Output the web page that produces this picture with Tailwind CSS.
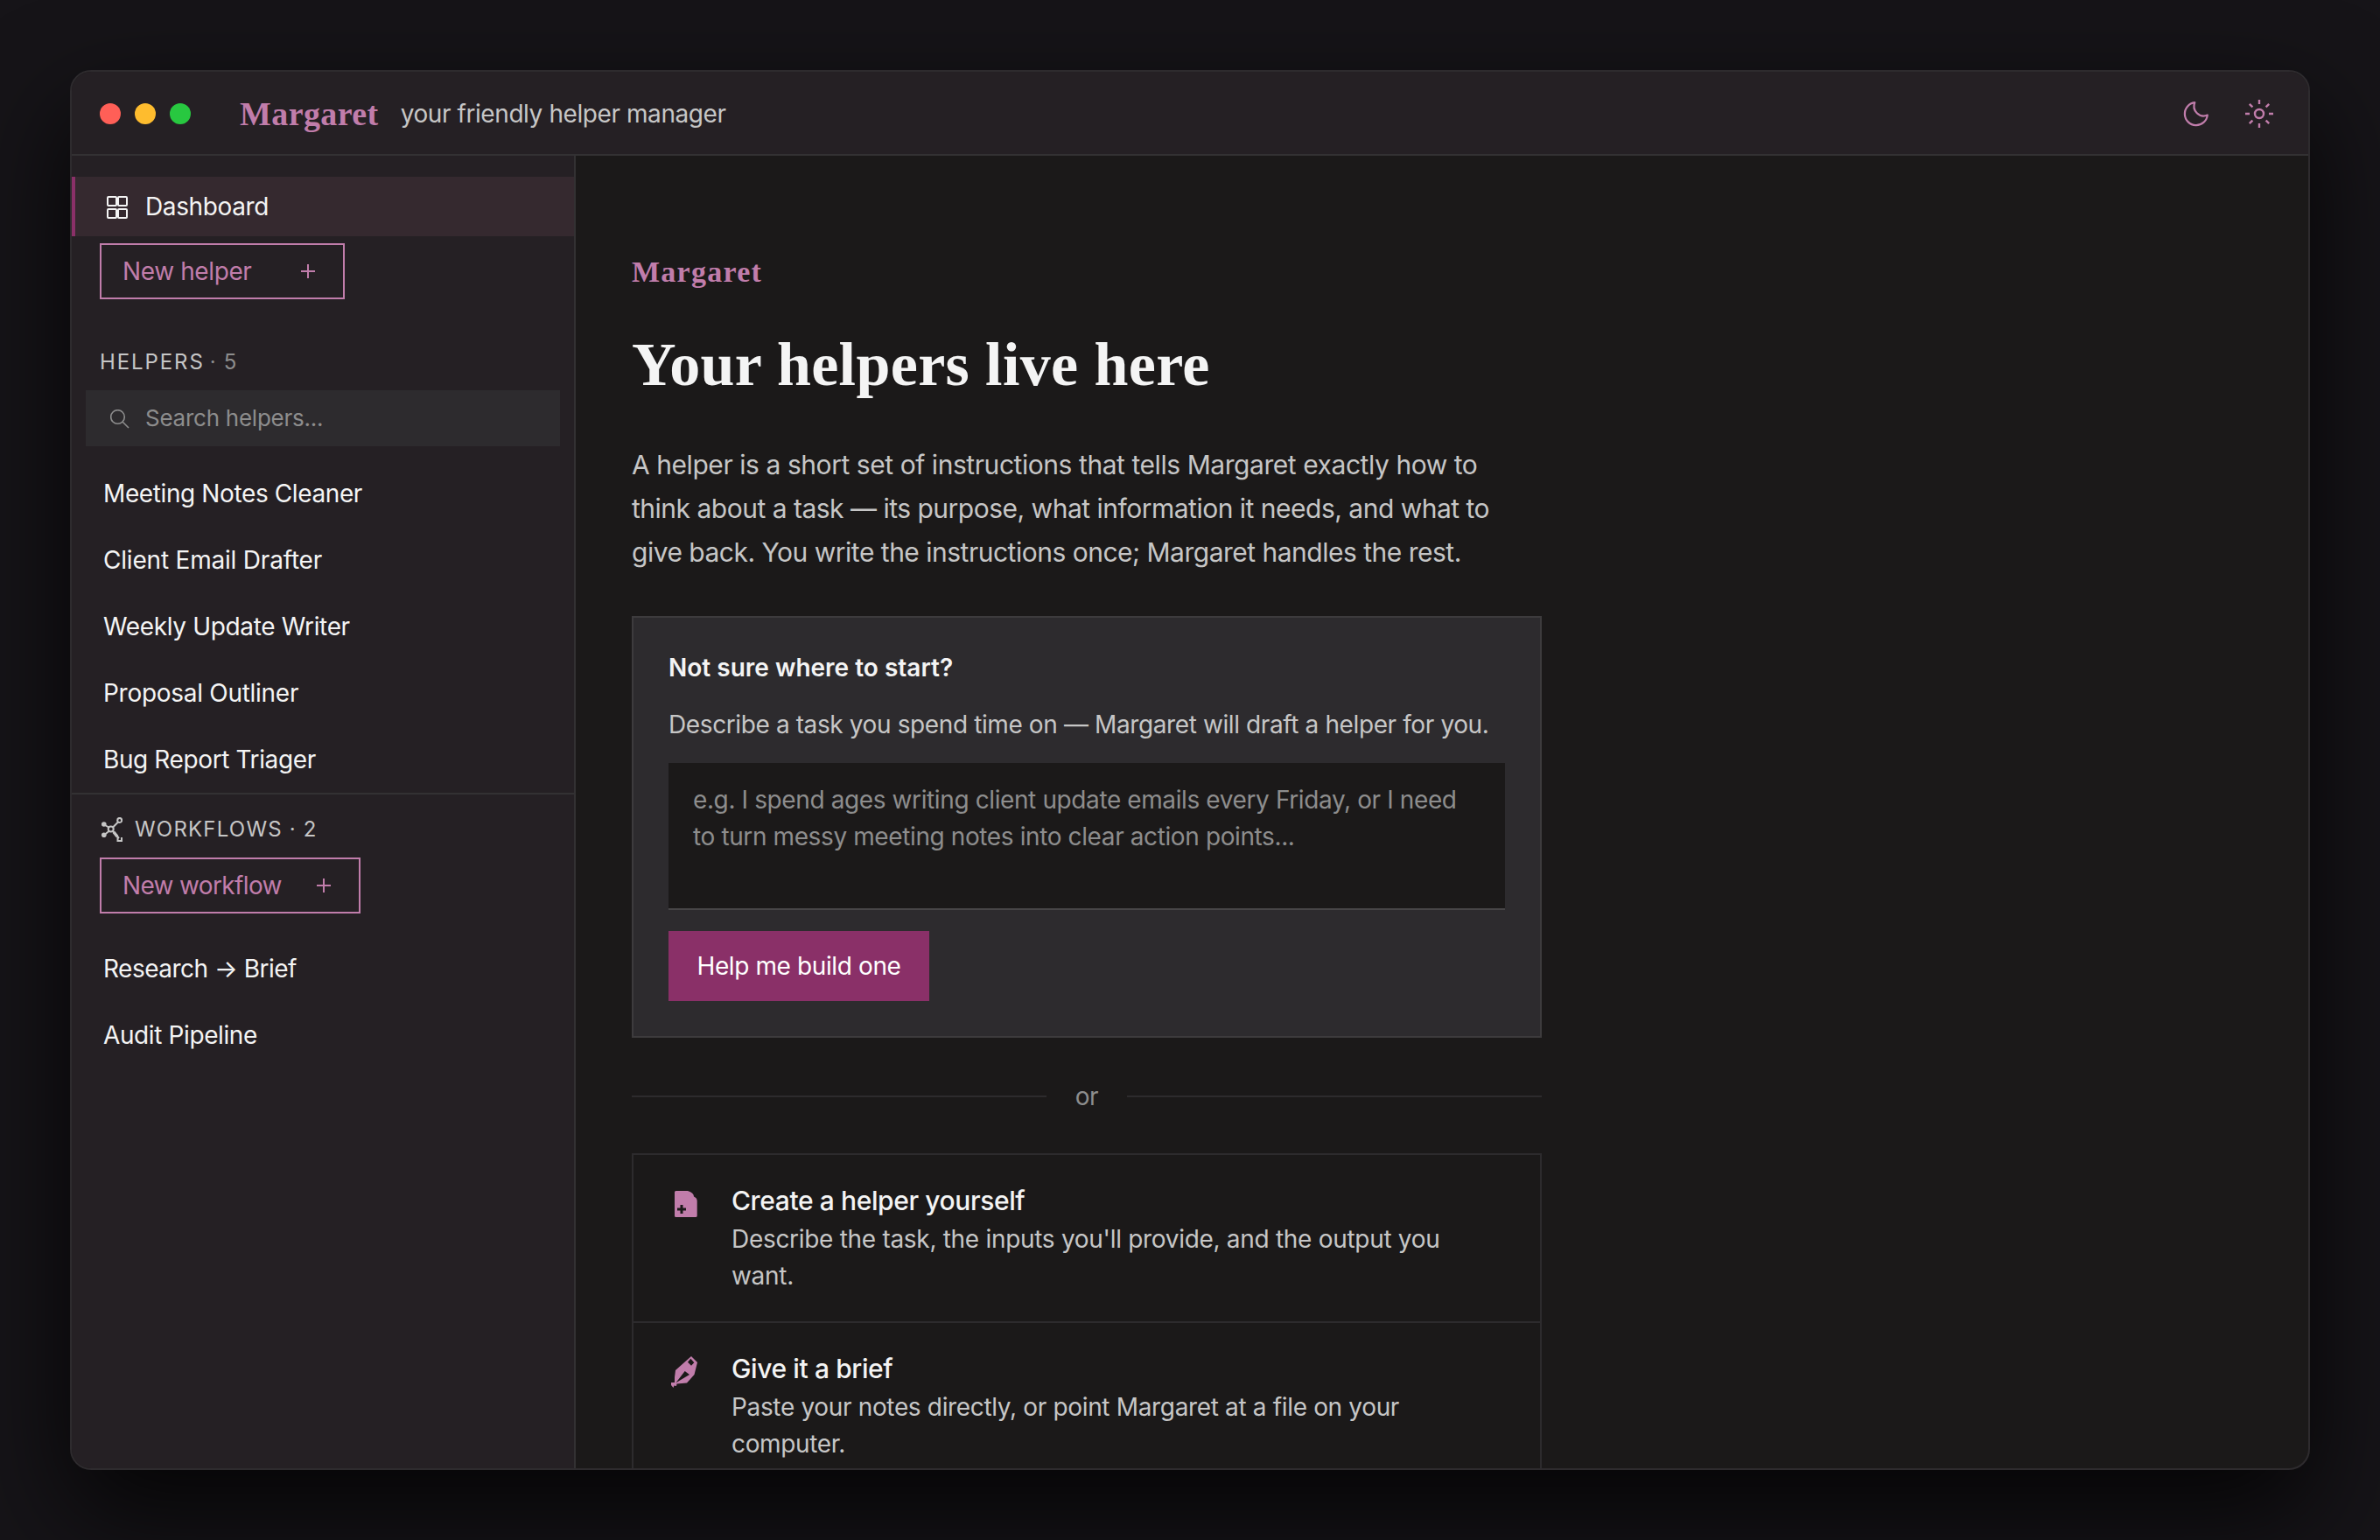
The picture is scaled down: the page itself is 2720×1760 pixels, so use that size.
<!DOCTYPE html>
<html lang="en">
<head>
    <meta charset="UTF-8">
    <meta name="viewport" content="width=device-width, initial-scale=1.0">
    <title>Margaret</title>
    <!-- Tailwind CSS for styling -->
    <script src="https://cdn.jsdelivr.net/npm/@tailwindcss/browser@4"></script>
</head>
<body class="h-screen overflow-hidden bg-[#161418] p-20 font-['Inter',sans-serif] text-[28px] leading-[42px] tracking-[-0.39px] text-[#f4f4f4]">

    <!-- App window -->
    <div class="flex h-[1600px] w-[2560px] flex-col overflow-hidden rounded-3xl border-2 border-[#2e2b2e] bg-[#1b1919] shadow-[0_48px_120px_rgba(0,0,0,0.8)]">

        <!-- Title bar -->
        <header class="flex h-24 shrink-0 items-center border-b-2 border-[#333133] bg-[#252024] pt-0.5 pr-10 pl-8">
            <div class="flex gap-4">
                <span class="size-6 rounded-full bg-[#ff5f57]"></span>
                <span class="size-6 rounded-full bg-[#febc2e]"></span>
                <span class="size-6 rounded-full bg-[#28c840]"></span>
            </div>
            <span class="ml-14 font-['Liberation_Serif',serif] text-[38px] font-bold tracking-[0.4px] text-[#c17dab]">Margaret</span>
            <span class="ml-[25px] tracking-[-0.42px] text-[#c6c6c6]">your friendly helper manager</span>
            <div class="ml-auto flex items-center gap-10 text-[#c17dab]">
                <svg class="size-8" viewBox="0 0 32 32" fill="none" stroke="currentColor" stroke-width="2.2" stroke-linejoin="round"><path d="M14.3 3.2A13 13 0 1 0 28.8 17.5 11 11 0 0 1 14.3 3.2Z"/></svg>
                <svg class="size-8" viewBox="0 0 32 32" fill="none" stroke="currentColor" stroke-width="2.4"><circle cx="16" cy="16" r="5"/><path d="M16 0v5M16 27v5M0 16h5M27 16h5M4.8 4.8l3.6 3.6M23.6 23.6l3.6 3.6M4.8 27.2l3.6-3.6M23.6 8.4l3.6-3.6"/></svg>
            </div>
        </header>

        <div class="flex min-h-0 flex-1">
            <!-- Sidebar -->
            <aside class="w-[576px] shrink-0 border-r-2 border-[#333133] bg-[#252024] pt-6">
                <a class="flex h-[68px] items-center gap-5 border-l-4 border-[#8a3068] bg-[#35292f] pl-9">
                    <svg class="mt-0.5 h-[26px] w-6" viewBox="0 0 24 26" fill="none" stroke="currentColor" stroke-width="2"><rect x="1" y="1" width="10" height="10" rx="1"/><rect x="13" y="1" width="10" height="10" rx="1"/><rect x="1" y="15" width="10" height="10" rx="1"/><rect x="13" y="15" width="10" height="10" rx="1"/></svg>
                    <span>Dashboard</span>
                </a>
                <button class="mt-2 ml-8 flex h-16 w-[280px] items-center justify-between border-2 border-[#c17dab] pr-8 pl-6 text-[#c17dab]">
                    <span>New helper</span>
                    <svg class="size-4" viewBox="0 0 16 16" stroke="currentColor" stroke-width="2"><path d="M8 0v16M0 8h16"/></svg>
                </button>

                <!-- Helpers -->
                <div class="flex h-[104px] items-center pt-10 pl-8 text-2xl tracking-[1.9px] text-[#c6c6c6]">HELPERS<span class="ml-1.5 tracking-[1.2px] text-[#8d8d8d]">· 5</span></div>
                <div class="ml-4 flex h-16 w-[542px] items-center gap-[18px] bg-[#2d2b2e] pl-7 text-[26px] tracking-[-0.25px] text-[#8d8d8d]">
                    <svg class="mt-0.5 size-[22px]" viewBox="0 0 22 22" fill="none" stroke="currentColor" stroke-width="1.6"><circle cx="8.5" cy="8.5" r="7.8"/><path d="M14 14l7 7"/></svg>
                    <span>Search helpers...</span>
                </div>
                <ul class="mt-4 border-b-2 border-[#333133] pl-9">
                    <li class="flex h-[76px] items-center">Meeting Notes Cleaner</li>
                    <li class="flex h-[76px] items-center tracking-[-0.2px]">Client Email Drafter</li>
                    <li class="flex h-[76px] items-center tracking-[-0.35px]">Weekly Update Writer</li>
                    <li class="flex h-[76px] items-center tracking-[-0.28px]">Proposal Outliner</li>
                    <li class="flex h-[76px] items-center">Bug Report Triager</li>
                </ul>

                <!-- Workflows -->
                <div class="flex h-[72px] items-center gap-[14px] pt-2 pl-[34px] text-2xl tracking-[1.2px] text-[#c6c6c6]">
                    <svg class="h-7 w-6" viewBox="0 0 24 28" fill="none" stroke="currentColor" stroke-width="2"><circle cx="10.7" cy="13.5" r="3"/><circle cx="20.7" cy="3.4" r="2.5"/><path d="M13 11.5l6-6M4 9l5 3M4 19.5l5-4M13 16l7 8"/><path d="M14 17l4 5" stroke-width="3.5"/><circle cx="2.8" cy="8" r="2.8" fill="currentColor" stroke="none"/><circle cx="2.8" cy="20.3" r="2.8" fill="currentColor" stroke="none"/><path d="M18.5 22v5h4.5v-4"/></svg>
                    <span>WORKFLOWS · 2</span>
                </div>
                <button class="ml-8 flex h-16 w-[298px] items-center justify-between border-2 border-[#c17dab] pr-8 pl-6 text-[#c17dab]">
                    <span class="tracking-[-0.65px]">New workflow</span>
                    <svg class="size-4" viewBox="0 0 16 16" stroke="currentColor" stroke-width="2"><path d="M8 0v16M0 8h16"/></svg>
                </button>
                <ul class="mt-[25px] pl-9">
                    <li class="flex h-[76px] items-center tracking-[-0.5px]">Research → Brief</li>
                    <li class="flex h-[76px] items-center">Audit Pipeline</li>
                </ul>
            </aside>

            <!-- Dashboard content -->
            <main class="flex-1 overflow-hidden pt-28 pl-16">
                <div class="w-[1040px]">
                    <p class="font-['Liberation_Serif',serif] text-[34px] font-bold tracking-[1.25px] text-[#c17dab]">Margaret</p>
                    <h1 class="mt-[45px] font-['Liberation_Serif',serif] text-[70px] leading-[80px] font-bold tracking-[0.37px]">Your helpers live here</h1>
                    <p class="mt-[49px] text-[30px] leading-[50px] tracking-[-0.5px] text-[#c6c6c6]"><span class="tracking-[-0.44px]">A helper is a short set of instructions that tells Margaret exactly how to</span><br>think about a task — its purpose, what information it needs, and what to<br>give back. You write the instructions once; Margaret handles the rest.</p>

                    <!-- Draft card -->
                    <section class="mt-12 h-[482px] border-2 border-[#3d3b3d] bg-[#2d2b2e] px-10 pt-9">
                        <h2 class="font-semibold tracking-normal">Not sure where to start?</h2>
                        <p class="mt-[23px] whitespace-nowrap text-[#c6c6c6]">Describe a task you spend time on — Margaret will draft a helper for you.</p>
                        <textarea class="mt-[23px] block h-[168px] w-full resize-none overflow-hidden border-b-2 border-[#474547] bg-[#1b1919] px-7 py-[21px] placeholder:text-[#8d8d8d]" placeholder="e.g. I spend ages writing client update emails every Friday, or I need to turn messy meeting notes into clear action points..."></textarea>
                        <button class="mt-6 h-20 w-[298px] bg-[#8a3068] text-white">Help me build one</button>
                    </section>

                    <div class="mt-[46px] flex items-center text-[#8d8d8d]">
                        <span class="h-0.5 w-[474px] bg-[#2d2b2d]"></span>
                        <span class="flex-1 text-center">or</span>
                        <span class="h-0.5 w-[474px] bg-[#2d2b2d]"></span>
                    </div>

                    <!-- Options -->
                    <div class="mt-11 border-2 border-[#2d2b2d]">
                        <div class="flex h-48 border-b-2 border-[#2d2b2d] pt-[30px] pl-10">
                            <svg class="mt-1 size-10 text-[#c17dab]" viewBox="0 0 40 40"><path fill="currentColor" fill-rule="evenodd" d="M8.5 7H22Q29 9 29 13.5 32.7 15 32.7 18.5V35.5Q32.7 37 31 37H8.5Q7 37 7 35.500V8.5Q7 7 8.5 7ZM13.500 23v3.500H10v3h3.500V33h3v-3.500H20v-3h-3.500V23Z"/></svg>
                            <div class="ml-8">
                                <h3 class="text-[30px] leading-[45px] font-medium">Create a helper yourself</h3>
                                <p class="w-[860px] tracking-[-0.3px] text-[#c6c6c6]">Describe the task, the inputs you'll provide, and the output you want.</p>
                            </div>
                        </div>
                        <div class="flex h-48 pt-[30px] pl-10">
                            <svg class="mt-1 size-10 text-[#c17dab]" viewBox="0 0 40 40"><path fill="currentColor" fill-rule="evenodd" d="M26 4 33 11 29.5 25 21 34.5 9.5 35.5 9 38 6.5 37.5 5.5 40 3 37 3 34 7 34 7 28 8 20ZM25.3 6.7 22 10.7 26 14.7 29.3 11.3ZM18.7 21 8.5 34.2 24 25Z"/></svg>
                            <div class="ml-8">
                                <h3 class="text-[30px] leading-[45px] font-medium">Give it a brief</h3>
                                <p class="w-[800px] tracking-[-0.34px] text-[#c6c6c6]">Paste your notes directly, or point Margaret at a file on your computer.</p>
                            </div>
                        </div>
                    </div>
                </div>
            </main>
        </div>
    </div>

</body>
</html>
